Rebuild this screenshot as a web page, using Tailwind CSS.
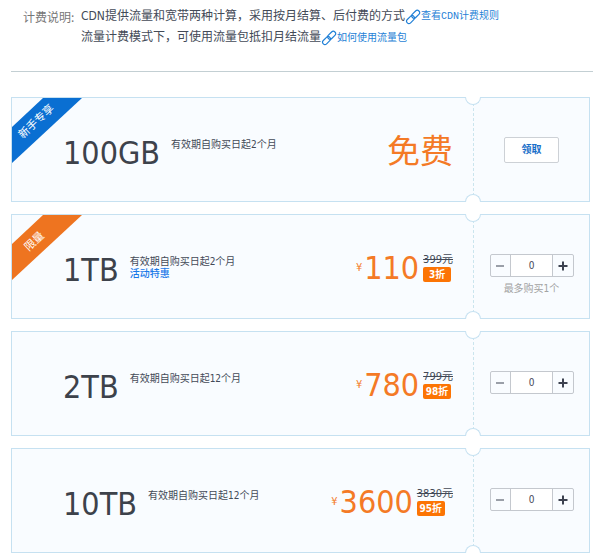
<!DOCTYPE html>
<html lang="zh-CN">
<head>
  <meta charset="UTF-8" />
  <meta name="viewport" content="width=device-width, initial-scale=1" />
  <title>CDN流量包</title>
  <script src="https://cdn.jsdelivr.net/npm/@tailwindcss/browser@4"></script>
</head>
<body class="bg-white font-['DejaVu_Sans_Condensed','Noto_Sans_CJK_SC',sans-serif] text-[10px] leading-3 text-[#434a57]">
  <!-- 计费说明 -->
  <header class="ml-[11px] mr-[7px] flex h-[66px] border-b border-[#c3cfd3] pl-3 text-xs leading-[21px] mt-[6px]">
    <h1 class="w-[58px] shrink-0 font-['Noto_Sans_CJK_SC',sans-serif] text-[#777]">计费说明:</h1>
    <div>
      <p class="flex items-center whitespace-nowrap">
        CDN提供流量和宽带两种计算，采用按月结算、后付费的方式
        <a href="#" class="flex items-center font-['Liberation_Mono','Noto_Sans_CJK_SC',monospace] text-[10px] text-[#1f7fd6]">
          <svg class="size-4" viewBox="0 0 15 15" fill="none" stroke="currentColor" stroke-width="1.1"><rect x="5.700" y="2.700" width="8.600" height="4.400" rx="2.200" transform="rotate(-45 10 4.900)"/><rect x="0.900" y="7.700" width="8.600" height="4.400" rx="2.200" transform="rotate(-45 5.200 9.900)"/></svg>
          查看CDN计费规则
        </a>
      </p>
      <p class="flex items-center whitespace-nowrap">
        流量计费模式下，可使用流量包抵扣月结流量
        <a href="#" class="flex items-center text-[10px] text-[#1f7fd6]">
          <svg class="size-4" viewBox="0 0 15 15" fill="none" stroke="currentColor" stroke-width="1.1"><rect x="5.700" y="2.700" width="8.600" height="4.400" rx="2.200" transform="rotate(-45 10 4.900)"/><rect x="0.900" y="7.700" width="8.600" height="4.400" rx="2.200" transform="rotate(-45 5.200 9.900)"/></svg>
          如何使用流量包
        </a>
      </p>
    </div>
  </header>

  <main class="ml-[11px] mr-[10px] mt-[25px] flex flex-col gap-3">
    <!-- 100GB 新手专享 -->
    <section class="relative flex h-[105px] border border-[#c6e1f1] bg-[#f9fcff]">
      <svg class="absolute left-0 top-0 h-[65px] w-[70px]" viewBox="0 0 70 65">
        <polygon points="31,0 70,0 0,65 0,29" fill="#0a6fd2"/>
        <text x="24" y="27" transform="rotate(-43 24 23)" text-anchor="middle" font-size="11" fill="#fff">新手专享</text>
      </svg>
      <div class="flex flex-1 gap-[11px] pl-[51px]">
        <h2 class="pt-[39px] text-[32px] leading-8 text-[#3d424b]">100GB</h2>
        <p class="pt-[41px]">有效期自购买日起2个月</p>
      </div>
      <p class="pr-5 pt-[35px] font-['Noto_Sans_CJK_SC',sans-serif] text-[33px] leading-8 text-[#f47a26]">免费</p>
      <div class="relative flex w-29 flex-col items-center border-l border-dashed border-[#cbe5ee] pt-[39px]">
        <span class="absolute -left-[9px] -top-px h-2 w-4 rounded-b-full border border-t-0 border-[#c6e1f1] bg-white"></span>
        <span class="absolute -bottom-px -left-[9px] h-2 w-4 rounded-t-full border border-b-0 border-[#c6e1f1] bg-white"></span>
        <button class="h-[26px] w-[55px] rounded-xs border border-[#cdd1d6] bg-white font-bold text-[#1a6fc9]">领取</button>
      </div>
    </section>

    <!-- 1TB 限量 -->
    <section class="relative flex h-[105px] border border-[#c6e1f1] bg-[#f9fcff]">
      <svg class="absolute left-0 top-0 h-[65px] w-[70px]" viewBox="0 0 70 65">
        <polygon points="31,0 70,0 0,65 0,29" fill="#ee7420"/>
        <text x="22" y="30" transform="rotate(-43 22 26)" text-anchor="middle" font-size="11" fill="#fff">限量</text>
      </svg>
      <div class="flex flex-1 gap-[11px] pl-[51px]">
        <h2 class="pt-[39px] text-[32px] leading-8 text-[#3d424b]">1TB</h2>
        <div class="pt-[41px]">
          <p>有效期自购买日起2个月</p>
          <p class="font-medium text-[#1878e8]">活动特惠</p>
        </div>
      </div>
      <div class="flex items-start gap-1 pr-5 pt-[37px]">
        <p class="flex items-center gap-[2px] text-[#f47a26]"><span class="text-[11px]">¥</span><span class="text-[32px] leading-8">110</span></p>
        <div class="text-[11px] leading-[15px]">
          <del class="block">399元</del>
          <span class="block h-[15px] w-7 rounded-xs bg-[#fc7404] text-center text-[10px] font-bold text-white">3折</span>
        </div>
      </div>
      <div class="relative flex w-29 flex-col items-center border-l border-dashed border-[#cbe5ee] pt-[39px]">
        <span class="absolute -left-[9px] -top-px h-2 w-4 rounded-b-full border border-t-0 border-[#c6e1f1] bg-white"></span>
        <span class="absolute -bottom-px -left-[9px] h-2 w-4 rounded-t-full border border-b-0 border-[#c6e1f1] bg-white"></span>
        <div class="flex h-[23px] w-[84px] rounded-xs border border-[#c4c8ce]">
          <button class="minus flex flex-1 items-center justify-center text-[#9a9fa8]" aria-label="减少"><svg class="size-[10px]" viewBox="0 0 10 10" stroke="currentColor" stroke-width="2"><path d="M1 5h8"/></svg></button>
          <input type="text" value="0" aria-label="1TB 数量" class="w-[43px] border-x border-[#c4c8ce] bg-white text-center" />
          <button class="plus flex flex-1 items-center justify-center text-[#3d4250]" aria-label="增加"><svg class="size-[10px]" viewBox="0 0 10 10" stroke="currentColor" stroke-width="2"><path d="M0.500 5h9M5 0.500v9"/></svg></button>
        </div>
        <p class="mt-[6px] text-[#a3a3a3]">最多购买1个</p>
      </div>
    </section>

    <!-- 2TB -->
    <section class="relative flex h-[105px] border border-[#c6e1f1] bg-[#f9fcff]">
      <div class="flex flex-1 gap-[11px] pl-[51px]">
        <h2 class="pt-[39px] text-[32px] leading-8 text-[#3d424b]">2TB</h2>
        <p class="pt-[41px]">有效期自购买日起12个月</p>
      </div>
      <div class="flex items-start gap-1 pr-5 pt-[37px]">
        <p class="flex items-center gap-[2px] text-[#f47a26]"><span class="text-[11px]">¥</span><span class="text-[32px] leading-8">780</span></p>
        <div class="text-[11px] leading-[15px]">
          <del class="block">799元</del>
          <span class="block h-[15px] w-7 rounded-xs bg-[#fc7404] text-center text-[10px] font-bold text-white">98折</span>
        </div>
      </div>
      <div class="relative flex w-29 flex-col items-center border-l border-dashed border-[#cbe5ee] pt-[39px]">
        <span class="absolute -left-[9px] -top-px h-2 w-4 rounded-b-full border border-t-0 border-[#c6e1f1] bg-white"></span>
        <span class="absolute -bottom-px -left-[9px] h-2 w-4 rounded-t-full border border-b-0 border-[#c6e1f1] bg-white"></span>
        <div class="flex h-[23px] w-[84px] rounded-xs border border-[#c4c8ce]">
          <button class="minus flex flex-1 items-center justify-center text-[#9a9fa8]" aria-label="减少"><svg class="size-[10px]" viewBox="0 0 10 10" stroke="currentColor" stroke-width="2"><path d="M1 5h8"/></svg></button>
          <input type="text" value="0" aria-label="2TB 数量" class="w-[43px] border-x border-[#c4c8ce] bg-white text-center" />
          <button class="plus flex flex-1 items-center justify-center text-[#3d4250]" aria-label="增加"><svg class="size-[10px]" viewBox="0 0 10 10" stroke="currentColor" stroke-width="2"><path d="M0.500 5h9M5 0.500v9"/></svg></button>
        </div>
      </div>
    </section>

    <!-- 10TB -->
    <section class="relative flex h-[105px] border border-[#c6e1f1] bg-[#f9fcff]">
      <div class="flex flex-1 gap-[11px] pl-[51px]">
        <h2 class="pt-[39px] text-[32px] leading-8 text-[#3d424b]">10TB</h2>
        <p class="pt-[41px]">有效期自购买日起12个月</p>
      </div>
      <div class="flex items-start gap-1 pr-5 pt-[37px]">
        <p class="flex items-center gap-[2px] text-[#f47a26]"><span class="text-[11px]">¥</span><span class="text-[32px] leading-8">3600</span></p>
        <div class="text-[11px] leading-[15px]">
          <del class="block">3830元</del>
          <span class="block h-[15px] w-7 rounded-xs bg-[#fc7404] text-center text-[10px] font-bold text-white">95折</span>
        </div>
      </div>
      <div class="relative flex w-29 flex-col items-center border-l border-dashed border-[#cbe5ee] pt-[39px]">
        <span class="absolute -left-[9px] -top-px h-2 w-4 rounded-b-full border border-t-0 border-[#c6e1f1] bg-white"></span>
        <span class="absolute -bottom-px -left-[9px] h-2 w-4 rounded-t-full border border-b-0 border-[#c6e1f1] bg-white"></span>
        <div class="flex h-[23px] w-[84px] rounded-xs border border-[#c4c8ce]">
          <button class="minus flex flex-1 items-center justify-center text-[#9a9fa8]" aria-label="减少"><svg class="size-[10px]" viewBox="0 0 10 10" stroke="currentColor" stroke-width="2"><path d="M1 5h8"/></svg></button>
          <input type="text" value="0" aria-label="10TB 数量" class="w-[43px] border-x border-[#c4c8ce] bg-white text-center" />
          <button class="plus flex flex-1 items-center justify-center text-[#3d4250]" aria-label="增加"><svg class="size-[10px]" viewBox="0 0 10 10" stroke="currentColor" stroke-width="2"><path d="M0.500 5h9M5 0.500v9"/></svg></button>
        </div>
      </div>
    </section>
  </main>

  <script>
    // 数量加减
    document.querySelectorAll(".minus, .plus").forEach(function (btn) {
      btn.addEventListener("click", function () {
        const input = btn.parentElement.querySelector("input");
        const step = btn.classList.contains("plus") ? 1 : -1;
        input.value = Math.max(0, Number(input.value) + step);
      });
    });
  </script>
</body>
</html>
